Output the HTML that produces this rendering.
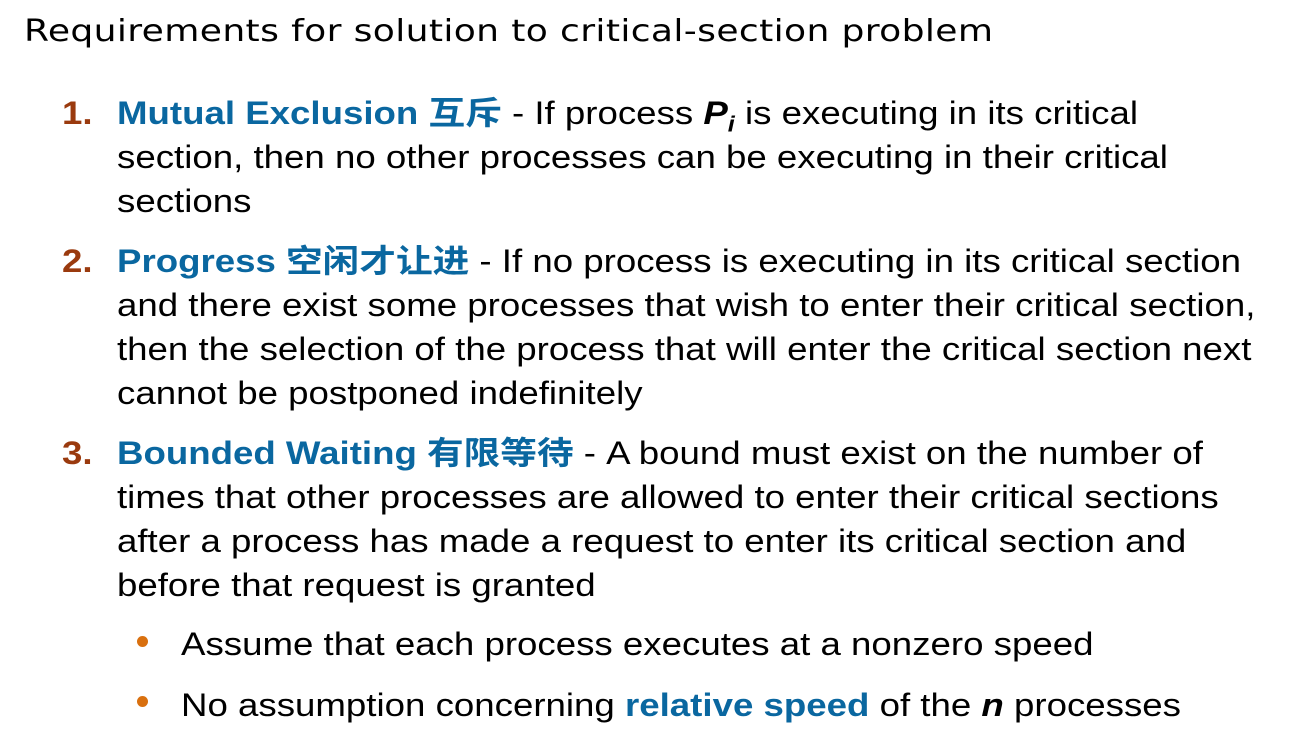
<!DOCTYPE html>
<html><head><meta charset="utf-8"><style>
body{margin:0;width:1291px;height:745px;background:#fff;position:relative;overflow:hidden;font-family:"Liberation Sans","Noto Sans CJK SC",sans-serif;color:#000}
.l{position:absolute;left:117px;font-size:32px;line-height:44px;white-space:nowrap;transform:scaleX(1.145);transform-origin:0 0;margin-top:1px}
.n{position:absolute;left:62px;font-size:32px;line-height:44px;font-weight:bold;color:#9a3a0e;transform:scaleX(1.145);transform-origin:0 0;margin-top:1px}
.b{color:#0a67a0;font-weight:bold}
.d{position:absolute;left:137px;width:11px;height:11px;border-radius:50%;background:#d9700f}
.t{position:absolute;left:24px;top:10px;font-family:"DejaVu Sans",sans-serif;font-size:30px;line-height:44px;white-space:nowrap;letter-spacing:0.3px;transform:scaleX(1.203);transform-origin:0 0}
</style></head><body>
<div class="t">Requirements for solution to critical-section problem</div>
<div class="n" style="top:90px">1.</div>
<div class="l" style="top:90px"><span class="b">Mutual Exclusion 互斥</span> - If process <b><i>P<sub style="font-size:22px">i</sub></i></b> is executing in its critical</div>
<div class="l" style="top:134px">section, then no other processes can be executing in their critical</div>
<div class="l" style="top:178px">sections</div>
<div class="n" style="top:238px">2.</div>
<div class="l" style="top:238px"><span class="b">Progress 空闲才让进</span> - If no process is executing in its critical section</div>
<div class="l" style="top:282px">and there exist some processes that wish to enter their critical section,</div>
<div class="l" style="top:326px">then the selection of the process that will enter the critical section next</div>
<div class="l" style="top:370px">cannot be postponed indefinitely</div>
<div class="n" style="top:430px">3.</div>
<div class="l" style="top:430px"><span class="b">Bounded Waiting 有限等待</span> - A bound must exist on the number of</div>
<div class="l" style="top:474px">times that other processes are allowed to enter their critical sections</div>
<div class="l" style="top:518px">after a process has made a request to enter its critical section and</div>
<div class="l" style="top:562px">before that request is granted</div>
<div class="d" style="top:636px"></div>
<div class="l" style="left:181px;top:621px">Assume that each process executes at a nonzero speed</div>
<div class="d" style="top:696px"></div>
<div class="l" style="left:181px;top:682px">No assumption concerning <span class="b">relative speed</span> of the <b><i>n</i></b> processes</div>
</body></html>
